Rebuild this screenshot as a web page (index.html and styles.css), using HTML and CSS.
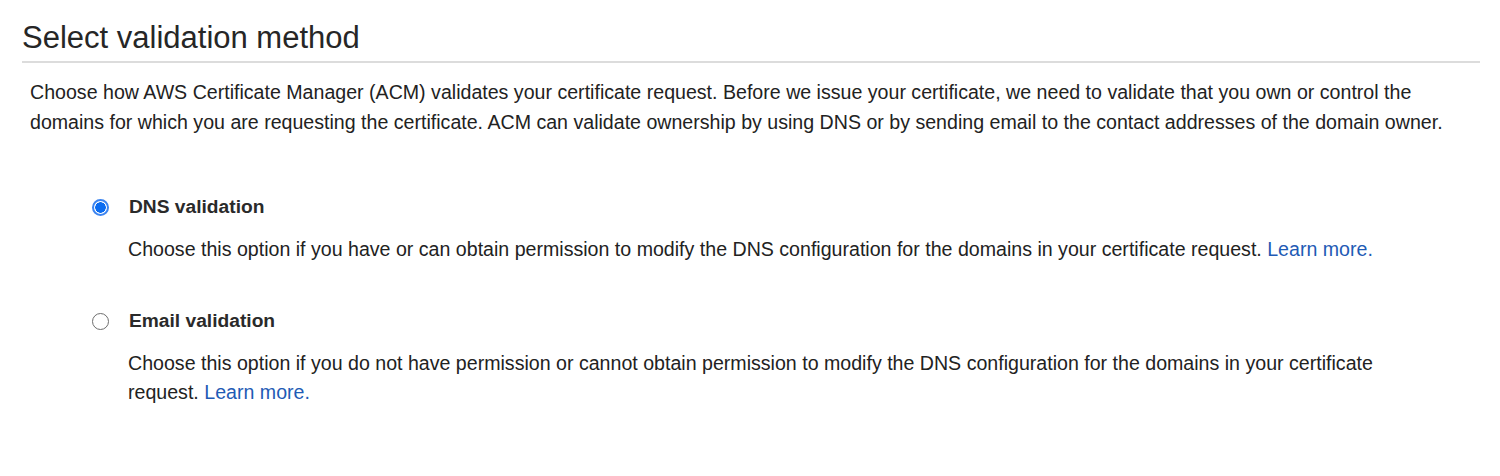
FILE: index.html
```html
<!DOCTYPE html>
<html>
<head>
<meta charset="utf-8">
<link rel="stylesheet" href="styles.css">
</head>
<body>
<section class="panel">
  <h2 class="title">Select validation method</h2>
  <p class="intro">Choose how AWS Certificate Manager (ACM) validates your certificate request. Before we issue your certificate, we need to validate that you own or control the domains for which you are requesting the certificate. ACM can validate ownership by using DNS or by sending email to the contact addresses of the domain owner.</p>
  <div class="options">
    <div class="option">
      <span class="radio checked"></span>
      <div class="body">
        <div class="label">DNS validation</div>
        <p class="desc">Choose this option if you have or can obtain permission to modify the DNS configuration for the domains in your certificate request. <a class="link" href="#">Learn more.</a></p>
      </div>
    </div>
    <div class="option">
      <span class="radio"></span>
      <div class="body">
        <div class="label">Email validation</div>
        <p class="desc">Choose this option if you do not have permission or cannot obtain permission to modify the DNS configuration for the domains in your certificate request. <a class="link" href="#">Learn more.</a></p>
      </div>
    </div>
  </div>
</section>
</body>
</html>
```
FILE: styles.css
```css
html, body {
  margin: 0;
  padding: 0;
  background: #ffffff;
}
body {
  font-family: "Liberation Sans", Arial, sans-serif;
  color: #222222;
}
.panel {
  padding: 20px 20px 0 22px;
}
.title {
  margin: 0;
  font-size: 31px;
  font-weight: 400;
  line-height: 36px;
  color: #262626;
  padding-bottom: 5px;
  border-bottom: 2px solid #dcdcdc;
}
.intro {
  margin: 14px 0 0 8px;
  font-size: 19.6px;
  line-height: 30px;
}
.options {
  margin-top: 57px;
  padding-left: 70px;
  display: flex;
  flex-direction: column;
  gap: 44px;
}
.option {
  display: flex;
  gap: 20px;
  align-items: flex-start;
}
.radio {
  box-sizing: border-box;
  width: 17px;
  height: 17px;
  border-radius: 50%;
  border: 1.5px solid #6e6e6e;
  margin-top: 5px;
  flex: none;
  background: #fff;
}
.radio.checked {
  border: 2px solid #3d85f0;
  background: radial-gradient(circle, #0b6cf0 0 5px, #ffffff 5.5px);
}
.label {
  font-weight: 700;
  font-size: 19.2px;
  line-height: 26px;
  color: #2a2a2a;
}
.desc {
  margin: 15px 0 0 -1px;
  font-size: 19.6px;
  line-height: 29px;
  max-width: 1300px;
}
.link {
  color: #1f5bb5;
  text-decoration: none;
}
```
